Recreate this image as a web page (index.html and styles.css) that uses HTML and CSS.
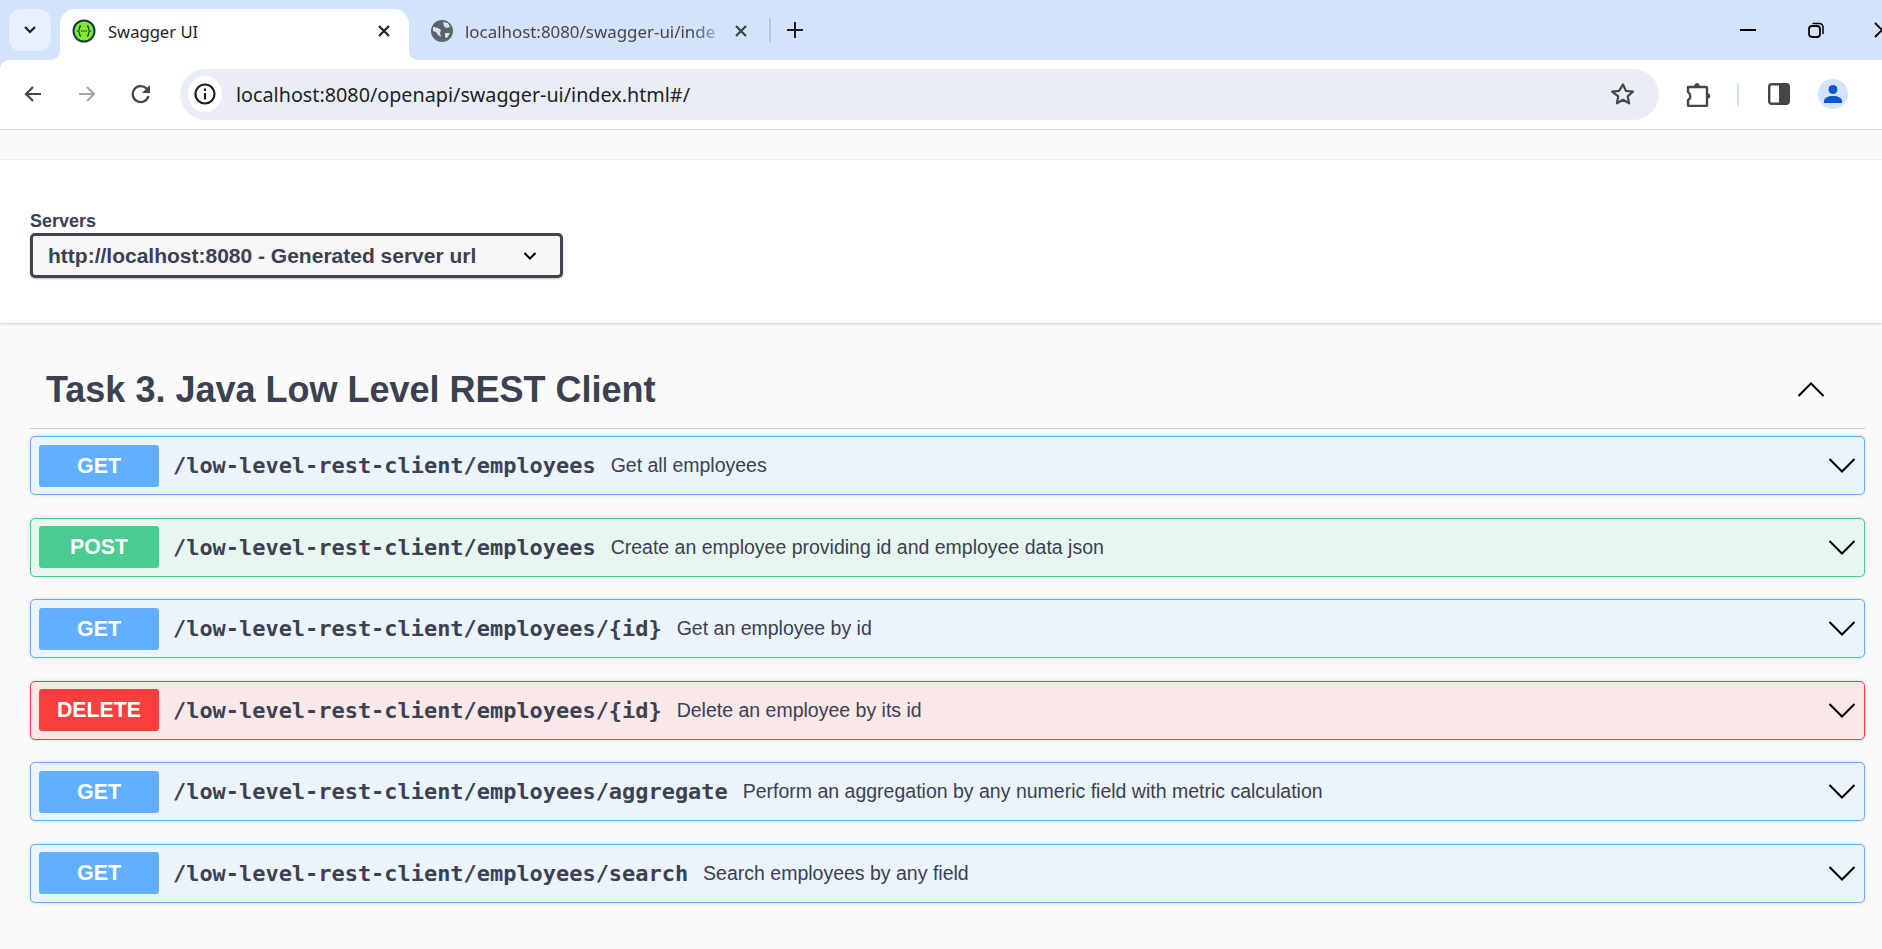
FILE: index.html
```html
<!DOCTYPE html>
<html>

<head>
    <title>Swagger UI</title>
    <link rel="stylesheet" href="styles.css">
</head>

<body>
    <div class="tabstrip">
        <div class="tab-search">
            <svg width="14" height="10" viewBox="0 0 14 10"><path d="M2 2l5 5 5-5" fill="none" stroke="#1f1f1f" stroke-width="2.2"/></svg>
        </div>
        <div class="tab active">
            <svg class="favicon" width="26" height="26" viewBox="0 0 26 26">
                <circle cx="13" cy="13" r="10.5" fill="#85ea2d" stroke="#173647" stroke-width="2"/>
                <path d="M10 8c-1.500 0-1.500 1-1.500 2.200s0 2.300-1.500 2.800c1.500.5 1.500 1.600 1.500 2.800s0 2.200 1.500 2.200M16 8c1.500 0 1.500 1 1.500 2.200s0 2.300 1.500 2.800c-1.500.5-1.500 1.600-1.500 2.800s0 2.200-1.500 2.200" fill="none" stroke="#173647" stroke-width="1.300"/>
                <circle cx="10.800" cy="13" r=".8" fill="#173647"/><circle cx="13" cy="13" r=".8" fill="#173647"/><circle cx="15.200" cy="13" r=".8" fill="#173647"/>
            </svg>
            <span class="tab-title">Swagger UI</span>
            <svg class="tab-close" width="14" height="14" viewBox="0 0 14 14"><path d="M2 2l10 10M12 2L2 12" stroke="#1f1f1f" stroke-width="2.200"/></svg>
        </div>
        <div class="tab other">
            <svg class="favicon" width="24" height="24" viewBox="0 0 24 24">
                <circle cx="12" cy="12" r="11" fill="#5f6368"/>
                <path d="M3 8l5 1 3 2-1 3 1 4-3-2-2-3-3-1zM13 3l5 1 2 4-4 1-2-2zM15 14l5 0-3 5-2-1z" fill="#d3e3fd"/>
            </svg>
            <span class="tab-title fade">localhost:8080/swagger-ui/inde</span>
            <svg class="tab-close" width="14" height="14" viewBox="0 0 14 14"><path d="M2 2l10 10M12 2L2 12" stroke="#3c4043" stroke-width="2.200"/></svg>
        </div>
        <div class="tab-sep"></div>
        <svg class="new-tab" width="18" height="18" viewBox="0 0 18 18"><path d="M9 1v16M1 9h16" stroke="#1f1f1f" stroke-width="2"/></svg>
        <div class="window-btns">
            <svg class="win-min" width="16" height="2" viewBox="0 0 16 2"><path d="M0 1h16" stroke="#000" stroke-width="2"/></svg>
            <svg class="win-max" width="16" height="16" viewBox="0 0 16 16"><rect x="1" y="4" width="11" height="11" rx="3" fill="none" stroke="#000" stroke-width="1.800"/><path d="M4.500 1.500h7a3.500 3.500 0 0 1 3.500 3.500v7" fill="none" stroke="#000" stroke-width="1.500"/></svg>
            <svg class="win-close" width="16" height="16" viewBox="0 0 16 16"><path d="M1 1l14 14M15 1L1 15" stroke="#000" stroke-width="1.800"/></svg>
        </div>
    </div>

    <div class="toolbar">
        <svg class="nav-btn" width="20" height="20" viewBox="0 0 20 20"><path d="M18 10H3M10 3l-7 7 7 7" fill="none" stroke="#444746" stroke-width="2.200"/></svg>
        <svg class="nav-btn" width="20" height="20" viewBox="0 0 20 20"><path d="M2 10h15M10 3l7 7-7 7" fill="none" stroke="#a6a8aa" stroke-width="2.200"/></svg>
        <svg class="nav-btn" width="20" height="20" viewBox="0 0 20 20"><path d="M17.500 12a8 8 0 1 1-2-7.500L18 7" fill="none" stroke="#444746" stroke-width="2.300"/><path d="M19 1v8h-8z" fill="#444746"/></svg>
        <div class="omnibox">
            <div class="site-info">
                <svg width="22" height="22" viewBox="0 0 22 22"><circle cx="11" cy="11" r="9.500" fill="none" stroke="#1f1f1f" stroke-width="2.200"/><path d="M11 10v6.500M11 5.500v2.500" stroke="#1f1f1f" stroke-width="2.200"/></svg>
            </div>
            <span class="url">localhost:8080/openapi/swagger-ui/index.html#/</span>
            <svg class="star" width="24" height="24" viewBox="0 0 24 24"><path d="M12 2.500l2.900 6.400 7 .8-5.200 4.700 1.400 6.900-6.100-3.500-6.100 3.500 1.400-6.900L1.100 9.700l7-.8z" fill="none" stroke="#444746" stroke-width="2.200" stroke-linejoin="round"/></svg>
        </div>
        <svg class="ext" width="28" height="26" viewBox="0 0 28 26">
            <path d="M3 6h18a1 1 0 0 1 1 1v17a1 1 0 0 1-1 1H4a1 1 0 0 1-1-1v-5c3-1.500 3-6 0-8z" fill="none" stroke="#444746" stroke-width="2.400" stroke-linejoin="round"/>
            <path d="M9 6c.5-5.500 5.500-5.500 6 0zM22 12c4.500.5 4.500 5.500 0 6z" fill="#444746"/>
        </svg>
        <div class="tool-sep"></div>
        <svg class="panel" width="22" height="22" viewBox="0 0 22 22"><rect x="1.200" y="1.200" width="19.600" height="19.600" rx="2.500" fill="#fff" stroke="#444746" stroke-width="2.400"/><rect x="11" y="1" width="10" height="20" fill="#444746"/></svg>
        <div class="avatar">
            <svg width="20" height="20" viewBox="0 0 20 20"><circle cx="10" cy="5.500" r="4.500" fill="#0b57d0"/><path d="M1 19v-2c0-3 4-5 9-5s9 2 9 5v2z" fill="#0b57d0"/></svg>
        </div>
    </div>

    <div class="page-top"></div>

    <div class="scheme-container">
        <span class="servers-title">Servers</span>
        <div class="servers-select">
            <span>http://localhost:8080 - Generated server url</span>
            <svg width="14" height="10" viewBox="0 0 14 10"><path d="M1.500 2l5.500 5.500L12.500 2" fill="none" stroke="#000" stroke-width="2"/></svg>
        </div>
    </div>

    <div class="wrapper">
        <div class="tag-heading">
            <h3>Task 3. Java Low Level REST Client</h3>
            <svg class="up-arrow" width="28" height="15" viewBox="0 0 28 15"><path d="M1.500 14L14 1.500 26.500 14" fill="none" stroke="#000" stroke-width="2"/></svg>
        </div>

        <div class="opblock get">
            <span class="method">GET</span>
            <span class="path">/low-level-rest-client/employees</span>
            <span class="desc">Get all employees</span>
            <svg class="arrow" width="28" height="15" viewBox="0 0 28 15"><path d="M1.500 1L14 13.500 26.500 1" fill="none" stroke="#000" stroke-width="2"/></svg>
        </div>
        <div class="opblock post">
            <span class="method">POST</span>
            <span class="path">/low-level-rest-client/employees</span>
            <span class="desc">Create an employee providing id and employee data json</span>
            <svg class="arrow" width="28" height="15" viewBox="0 0 28 15"><path d="M1.500 1L14 13.500 26.500 1" fill="none" stroke="#000" stroke-width="2"/></svg>
        </div>
        <div class="opblock get">
            <span class="method">GET</span>
            <span class="path">/low-level-rest-client/employees/{id}</span>
            <span class="desc">Get an employee by id</span>
            <svg class="arrow" width="28" height="15" viewBox="0 0 28 15"><path d="M1.500 1L14 13.500 26.500 1" fill="none" stroke="#000" stroke-width="2"/></svg>
        </div>
        <div class="opblock delete">
            <span class="method">DELETE</span>
            <span class="path">/low-level-rest-client/employees/{id}</span>
            <span class="desc">Delete an employee by its id</span>
            <svg class="arrow" width="28" height="15" viewBox="0 0 28 15"><path d="M1.500 1L14 13.500 26.500 1" fill="none" stroke="#000" stroke-width="2"/></svg>
        </div>
        <div class="opblock get">
            <span class="method">GET</span>
            <span class="path">/low-level-rest-client/employees/aggregate</span>
            <span class="desc">Perform an aggregation by any numeric field with metric calculation</span>
            <svg class="arrow" width="28" height="15" viewBox="0 0 28 15"><path d="M1.500 1L14 13.500 26.500 1" fill="none" stroke="#000" stroke-width="2"/></svg>
        </div>
        <div class="opblock get">
            <span class="method">GET</span>
            <span class="path">/low-level-rest-client/employees/search</span>
            <span class="desc">Search employees by any field</span>
            <svg class="arrow" width="28" height="15" viewBox="0 0 28 15"><path d="M1.500 1L14 13.500 26.500 1" fill="none" stroke="#000" stroke-width="2"/></svg>
        </div>
    </div>
</body>

</html>
```

FILE: styles.css
```css
html,
body {
    height: 949px;
    overflow: hidden;
}

body {
    margin: 0;
    padding: 0;
    font-family: "Liberation Sans", Arial, sans-serif;
    color: #3b4151;
    background-color: #fafafa;
}

/* browser tabs */
.tabstrip {
    display: flex;
    align-items: center;
    height: 60px;
    overflow: hidden;
    background-color: #d3e3fd;
}

.tab-search {
    display: flex;
    align-items: center;
    justify-content: center;
    flex: none;
    width: 42px;
    height: 42px;
    margin-left: 9px;
    border-radius: 12px;
    background-color: #e8f0fe;
}

.tab {
    display: flex;
    align-items: center;
    flex: none;
    box-sizing: border-box;
    height: 51px;
    margin-top: 9px;
    padding-bottom: 7px;
    font-family: "Noto Sans", sans-serif;
    font-size: 16.6px;
}

.tab.active {
    position: relative;
    width: 349px;
    margin-left: 9px;
    padding-left: 11px;
    padding-right: 18px;
    border-radius: 15px 15px 0 0;
    background-color: #fff;
    color: #1f1f1f;
}

/* flared bottom corners of the open tab */
.tab.active::before,
.tab.active::after {
    content: "";
    position: absolute;
    bottom: 0;
    width: 9px;
    height: 9px;
}

.tab.active::before {
    left: -9px;
    background: radial-gradient(circle at 0 0, transparent 8.5px, #fff 9px);
}

.tab.active::after {
    right: -9px;
    background: radial-gradient(circle at 100% 0, transparent 8.5px, #fff 9px);
}

.tab.other {
    width: 360px;
    padding-left: 21px;
    padding-right: 21px;
    color: #444746;
}

.tab-title {
    flex: 1;
    margin-left: 11px;
    white-space: nowrap;
}

.tab-title.fade {
    font-size: 16.9px;
    -webkit-mask-image: linear-gradient(to right, #000 85%, transparent 98%);
    mask-image: linear-gradient(to right, #000 85%, transparent 98%);
}

.tab-sep {
    flex: none;
    width: 2px;
    height: 24px;
    background-color: #a8c7fa;
}

.new-tab {
    flex: none;
    margin-left: 15px;
}

.window-btns {
    display: flex;
    align-items: center;
    flex: none;
    margin-left: auto;
    margin-right: -8px;
}

.win-max {
    margin-left: 52px;
}

.win-close {
    margin-left: 50px;
}

/* address bar row */
.toolbar {
    position: relative;
    display: flex;
    align-items: center;
    box-sizing: border-box;
    height: 70px;
    padding: 0 0 1px 23px;
    border-bottom: 1px solid #dcdcdc;
    background-color: #fff;
}

.toolbar::before {
    content: "";
    position: absolute;
    top: 0;
    left: 0;
    width: 9px;
    height: 9px;
    background: radial-gradient(circle at 100% 100%, transparent 8.5px, #d3e3fd 9px);
}

.nav-btn {
    flex: none;
    margin-right: 34px;
}

.omnibox {
    display: flex;
    align-items: center;
    flex: none;
    box-sizing: border-box;
    width: 1479px;
    height: 51px;
    margin-left: -5px;
    padding: 0 24px 0 8px;
    border-radius: 26px;
    background-color: #e9eef6;
}

.site-info {
    display: flex;
    align-items: center;
    justify-content: center;
    flex: none;
    width: 34px;
    height: 36px;
    border-radius: 50%;
    background-color: #fff;
}

.url {
    flex: 1;
    margin-left: 14px;
    font-family: "Noto Sans", sans-serif;
    font-size: 19.75px;
    color: #1f1f1f;
}

.star {
    flex: none;
}

.ext {
    flex: none;
    margin-left: 26px;
}

.tool-sep {
    flex: none;
    width: 2px;
    height: 23px;
    margin-left: 24px;
    background-color: #d3e3fd;
}

.panel {
    flex: none;
    margin-left: 29px;
}

.avatar {
    display: flex;
    align-items: center;
    justify-content: center;
    flex: none;
    width: 30px;
    height: 30px;
    margin-left: 28px;
    border-radius: 50%;
    background-color: #d3e3fd;
}

/* swagger page */
.page-top {
    height: 29px;
    border-bottom: 1px solid #f0f0f0;
}

.scheme-container {
    box-sizing: border-box;
    height: 163px;
    padding: 51px 30px 0;
    background-color: #fff;
    box-shadow: 0 1px 2px 0 rgba(0, 0, 0, 0.2);
}

.servers-title {
    display: block;
    margin-bottom: 2px;
    font-size: 18px;
    font-weight: bold;
    line-height: 20px;
}

.servers-select {
    display: flex;
    align-items: center;
    justify-content: space-between;
    box-sizing: border-box;
    width: 533px;
    height: 45px;
    padding: 0 23px 0 15px;
    border: 3px solid #41444e;
    border-radius: 5px;
    background-color: #f7f7f7;
    box-shadow: 0 1px 2px 0 rgba(0, 0, 0, 0.25);
    font-size: 21px;
    font-weight: bold;
}

.wrapper {
    padding: 0 17px 0 30px;
}

.tag-heading {
    display: flex;
    align-items: center;
    justify-content: space-between;
    box-sizing: border-box;
    height: 106px;
    padding: 28px 40px 0 16px;
    border-bottom: 1px solid #c8c8c8;
}

.tag-heading h3 {
    margin: 0;
    font-size: 36px;
    font-weight: bold;
}

.up-arrow {
    flex: none;
}

.opblock {
    display: flex;
    align-items: center;
    box-sizing: border-box;
    height: 59px;
    margin-bottom: 22.5px;
    padding: 0 8px;
    border: 1px solid;
    border-radius: 5px;
    box-shadow: 0 0 3px rgba(0, 0, 0, 0.19);
}

.tag-heading + .opblock {
    margin-top: 7px;
}

.opblock.get {
    border-color: #61affe;
    background-color: #ebf3fb;
}

.opblock.post {
    border-color: #49cc90;
    background-color: #e8f6f0;
}

.opblock.delete {
    border-color: #f93e3e;
    background-color: #fae7e7;
}

.method {
    flex: none;
    width: 120px;
    height: 42px;
    border-radius: 3px;
    font-size: 21.3px;
    font-weight: bold;
    line-height: 42px;
    text-align: center;
    color: #fff;
}

.get .method {
    background-color: #61affe;
}

.post .method {
    background-color: #49cc90;
}

.delete .method {
    background-color: #f93e3e;
}

.path {
    flex: none;
    margin-left: 14px;
    font-family: "DejaVu Sans Mono", monospace;
    font-size: 21.95px;
    font-weight: bold;
}

.desc {
    flex: 1;
    margin-left: 15px;
    font-size: 19.5px;
}

.arrow {
    flex: none;
}
```
